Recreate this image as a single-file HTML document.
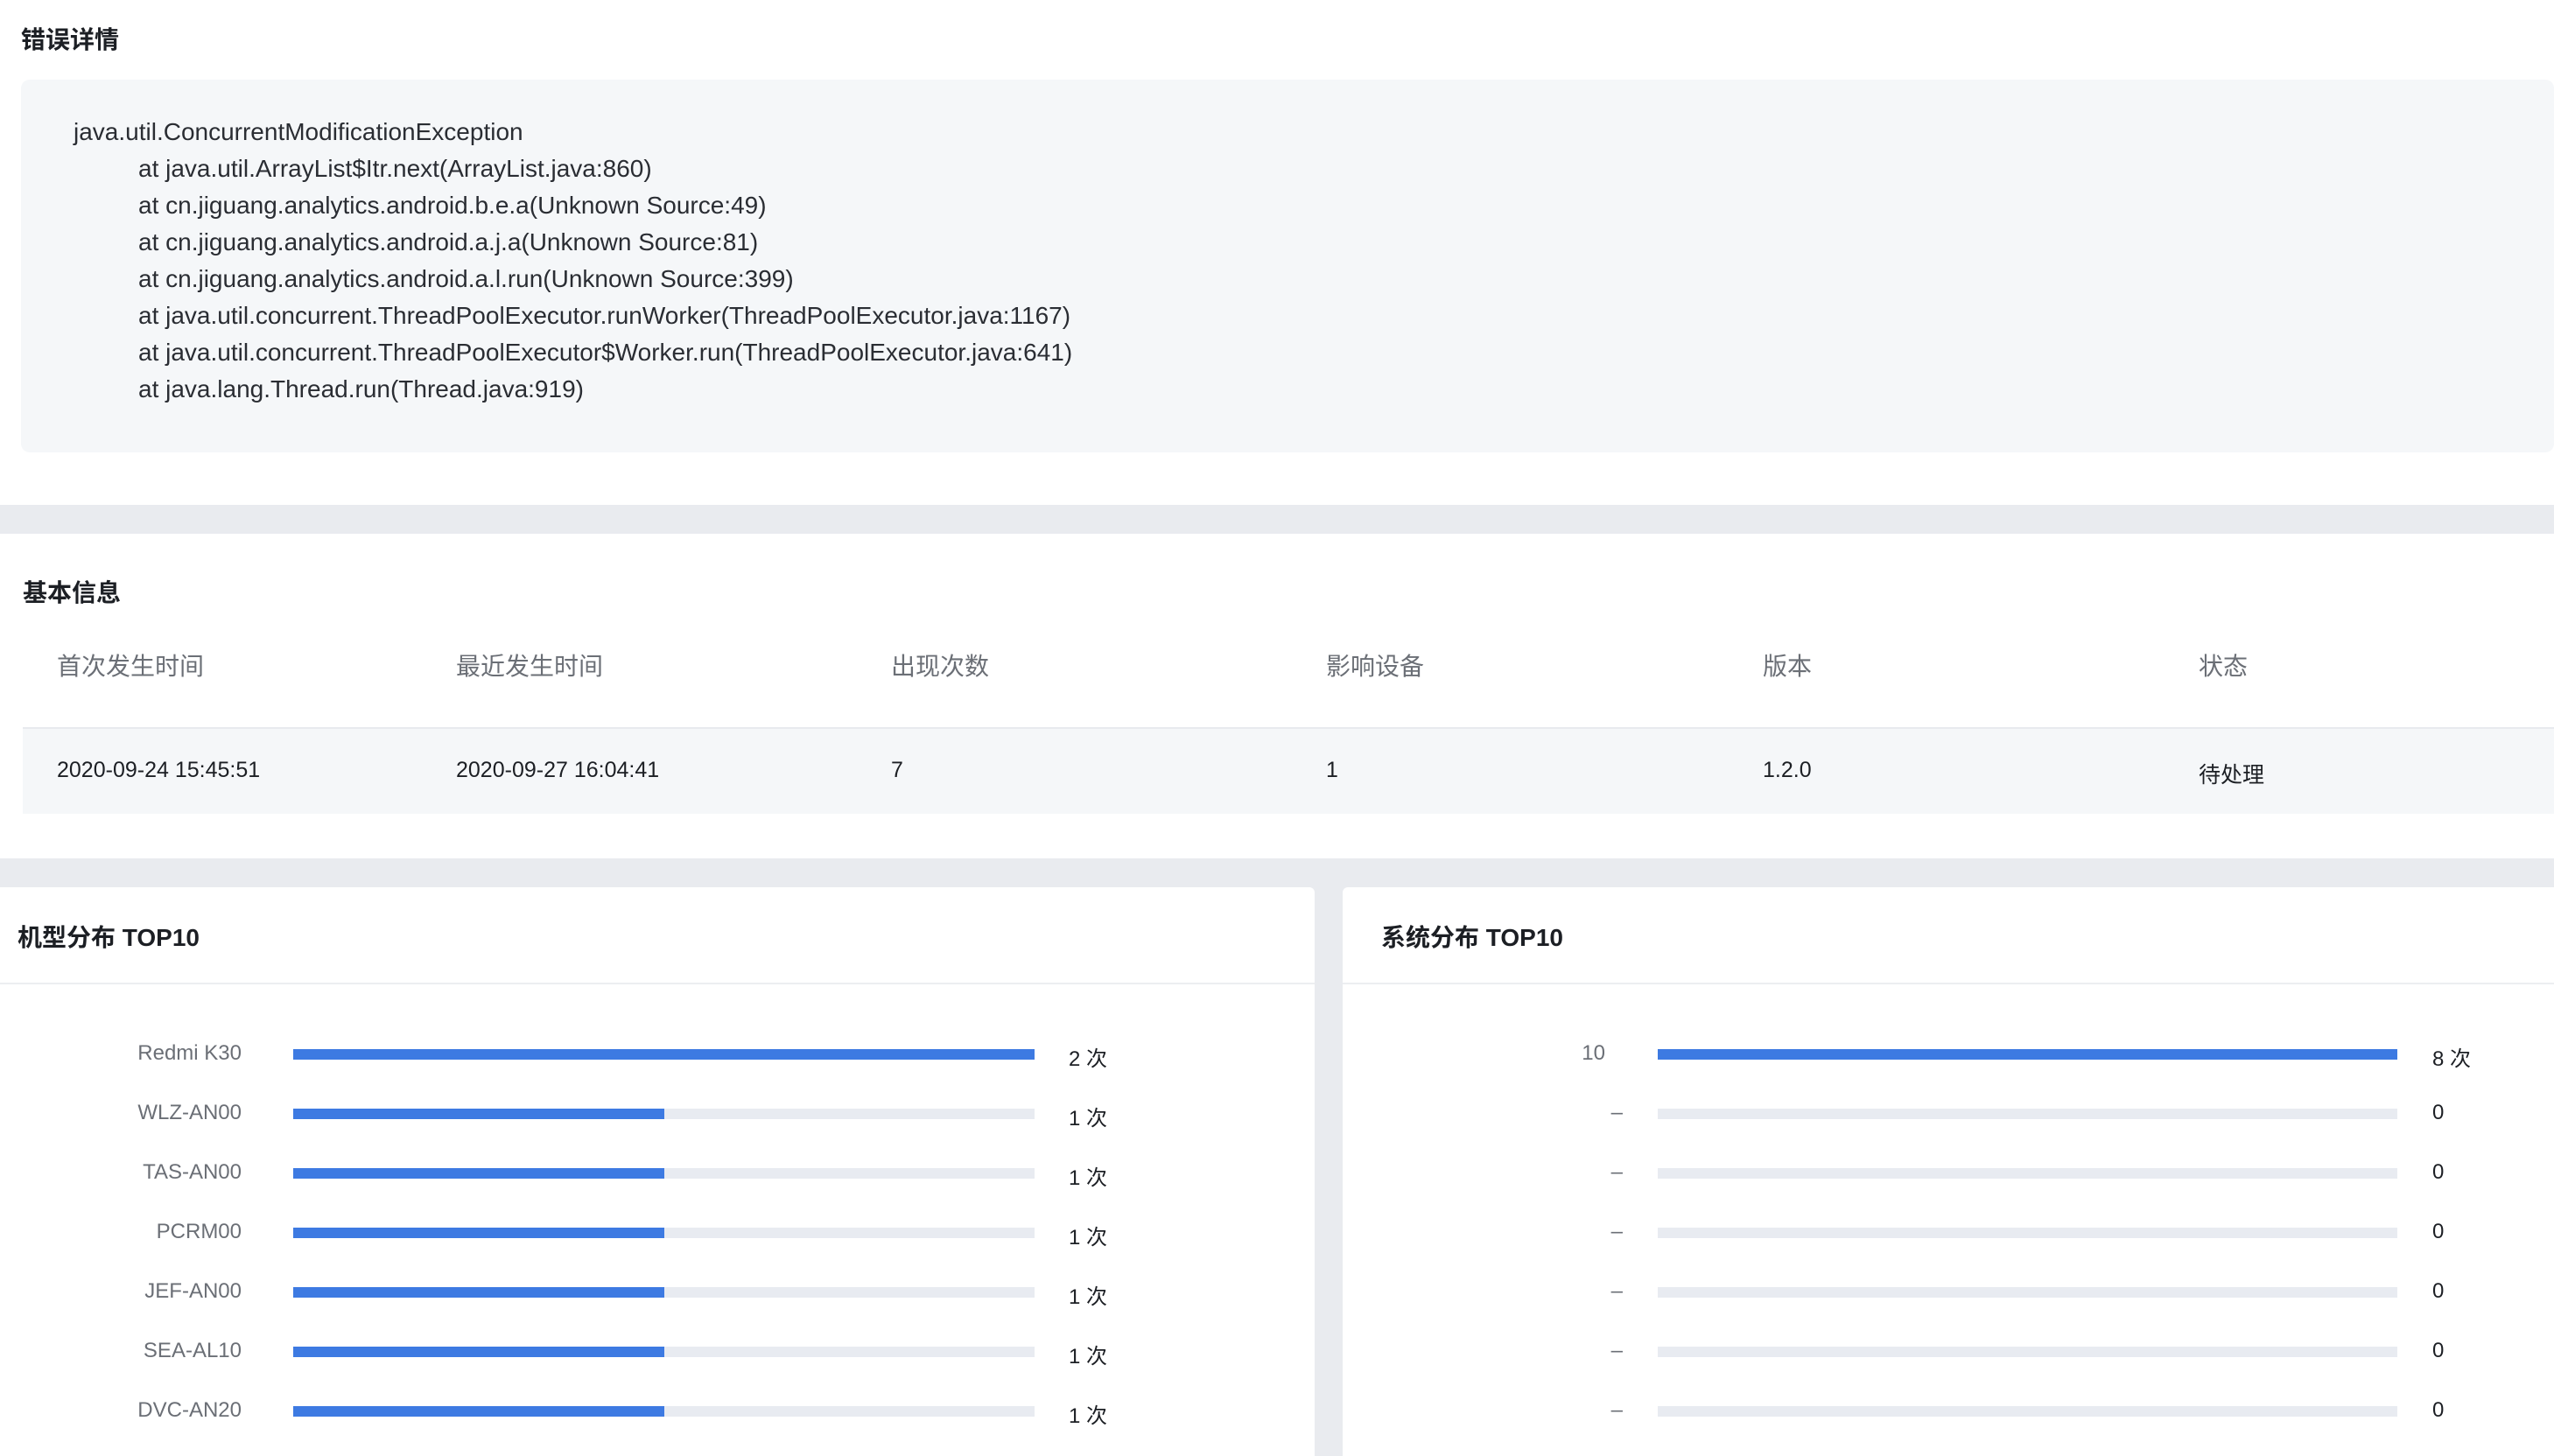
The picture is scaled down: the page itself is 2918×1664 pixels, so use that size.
<!DOCTYPE html>
<html><head><meta charset="utf-8"><style>
*{margin:0;padding:0;box-sizing:border-box}
body{width:2918px;height:1664px;overflow:hidden;background:#e9ebef;font-family:"Liberation Sans","Noto Sans CJK SC",sans-serif;position:relative}
.abs{position:absolute;white-space:nowrap}
.h{font-weight:bold;font-size:28px;color:#1c1f24}
.code{position:absolute;left:24px;top:91px;width:2894px;height:426px;background:#f5f7f9;border-radius:10px}
.cl{position:absolute;font-size:28px;color:#2a2d33;line-height:42px}
.th{font-size:28px;color:#6b6f76;top:740px}
.td{font-size:25px;color:#1c1f24;top:866px}
.lab{position:absolute;font-size:24px;color:#6b6f76;text-align:right;width:200px}
.bar{position:absolute;height:12px;background:#e8ebf1}
.fill{position:absolute;left:0;top:0;height:12px;background:#3d7ae2}
.val{position:absolute;font-size:24px;color:#1c1f24}
</style></head><body>
<div class="abs" style="left:0;top:0;width:2918px;height:577px;background:#fff"></div>
<div class="abs h" style="left:24px;top:24px">错误详情</div>
<div class="code">
<div class="cl" style="left:60px;top:39px">java.util.ConcurrentModificationException</div>
<div class="cl" style="left:134px;top:81px">at java.util.ArrayList$Itr.next(ArrayList.java:860)</div>
<div class="cl" style="left:134px;top:123px">at cn.jiguang.analytics.android.b.e.a(Unknown Source:49)</div>
<div class="cl" style="left:134px;top:165px">at cn.jiguang.analytics.android.a.j.a(Unknown Source:81)</div>
<div class="cl" style="left:134px;top:207px">at cn.jiguang.analytics.android.a.l.run(Unknown Source:399)</div>
<div class="cl" style="left:134px;top:249px">at java.util.concurrent.ThreadPoolExecutor.runWorker(ThreadPoolExecutor.java:1167)</div>
<div class="cl" style="left:134px;top:291px">at java.util.concurrent.ThreadPoolExecutor$Worker.run(ThreadPoolExecutor.java:641)</div>
<div class="cl" style="left:134px;top:333px">at java.lang.Thread.run(Thread.java:919)</div>
</div>

<div class="abs" style="left:0;top:610px;width:2918px;height:371px;background:#fff"></div>
<div class="abs h" style="left:26px;top:656px">基本信息</div>
<div class="abs th" style="left:65px">首次发生时间</div>
<div class="abs th" style="left:521px">最近发生时间</div>
<div class="abs th" style="left:1018px">出现次数</div>
<div class="abs th" style="left:1515px">影响设备</div>
<div class="abs th" style="left:2014px">版本</div>
<div class="abs th" style="left:2512px">状态</div>
<div class="abs" style="left:26px;top:831px;width:2892px;height:99px;background:#f5f7f9;border-top:2px solid #e8eaee"></div>
<div class="abs td" style="left:65px">2020-09-24 15:45:51</div>
<div class="abs td" style="left:521px">2020-09-27 16:04:41</div>
<div class="abs td" style="left:1018px">7</div>
<div class="abs td" style="left:1515px">1</div>
<div class="abs td" style="left:2014px">1.2.0</div>
<div class="abs td" style="left:2512px">待处理</div>

<div class="abs" style="left:0;top:1014px;width:1502px;height:650px;background:#fff;border-radius:0 6px 0 0"></div>
<div class="abs" style="left:1534px;top:1014px;width:1384px;height:650px;background:#fff;border-radius:6px 0 0 0"></div>
<div class="abs h" style="left:20px;top:1050px">机型分布 TOP10</div>
<div class="abs h" style="left:1578px;top:1050px">系统分布 TOP10</div>
<div class="abs" style="left:0;top:1123px;width:1502px;height:2px;background:#eceef1"></div>
<div class="abs" style="left:1534px;top:1123px;width:1384px;height:2px;background:#eceef1"></div>

<div class="lab" style="left:76px;top:1190px">Redmi K30</div>
<div class="bar" style="left:335px;top:1199px;width:847px"><div class="fill" style="width:847px"></div></div>
<div class="val" style="left:1221px;top:1190px">2 次</div>
<div class="lab" style="left:76px;top:1258px">WLZ-AN00</div>
<div class="bar" style="left:335px;top:1267px;width:847px"><div class="fill" style="width:424px"></div></div>
<div class="val" style="left:1221px;top:1258px">1 次</div>
<div class="lab" style="left:76px;top:1326px">TAS-AN00</div>
<div class="bar" style="left:335px;top:1335px;width:847px"><div class="fill" style="width:424px"></div></div>
<div class="val" style="left:1221px;top:1326px">1 次</div>
<div class="lab" style="left:76px;top:1394px">PCRM00</div>
<div class="bar" style="left:335px;top:1403px;width:847px"><div class="fill" style="width:424px"></div></div>
<div class="val" style="left:1221px;top:1394px">1 次</div>
<div class="lab" style="left:76px;top:1462px">JEF-AN00</div>
<div class="bar" style="left:335px;top:1471px;width:847px"><div class="fill" style="width:424px"></div></div>
<div class="val" style="left:1221px;top:1462px">1 次</div>
<div class="lab" style="left:76px;top:1530px">SEA-AL10</div>
<div class="bar" style="left:335px;top:1539px;width:847px"><div class="fill" style="width:424px"></div></div>
<div class="val" style="left:1221px;top:1530px">1 次</div>
<div class="lab" style="left:76px;top:1598px">DVC-AN20</div>
<div class="bar" style="left:335px;top:1607px;width:847px"><div class="fill" style="width:424px"></div></div>
<div class="val" style="left:1221px;top:1598px">1 次</div>

<div class="lab" style="left:1634px;top:1190px">10</div>
<div class="bar" style="left:1894px;top:1199px;width:845px"><div class="fill" style="width:845px"></div></div>
<div class="val" style="left:2779px;top:1190px">8 次</div>
<div class="lab" style="left:1654px;top:1258px">–</div>
<div class="bar" style="left:1894px;top:1267px;width:845px"></div>
<div class="val" style="left:2779px;top:1258px">0</div>
<div class="lab" style="left:1654px;top:1326px">–</div>
<div class="bar" style="left:1894px;top:1335px;width:845px"></div>
<div class="val" style="left:2779px;top:1326px">0</div>
<div class="lab" style="left:1654px;top:1394px">–</div>
<div class="bar" style="left:1894px;top:1403px;width:845px"></div>
<div class="val" style="left:2779px;top:1394px">0</div>
<div class="lab" style="left:1654px;top:1462px">–</div>
<div class="bar" style="left:1894px;top:1471px;width:845px"></div>
<div class="val" style="left:2779px;top:1462px">0</div>
<div class="lab" style="left:1654px;top:1530px">–</div>
<div class="bar" style="left:1894px;top:1539px;width:845px"></div>
<div class="val" style="left:2779px;top:1530px">0</div>
<div class="lab" style="left:1654px;top:1598px">–</div>
<div class="bar" style="left:1894px;top:1607px;width:845px"></div>
<div class="val" style="left:2779px;top:1598px">0</div>
</body></html>
